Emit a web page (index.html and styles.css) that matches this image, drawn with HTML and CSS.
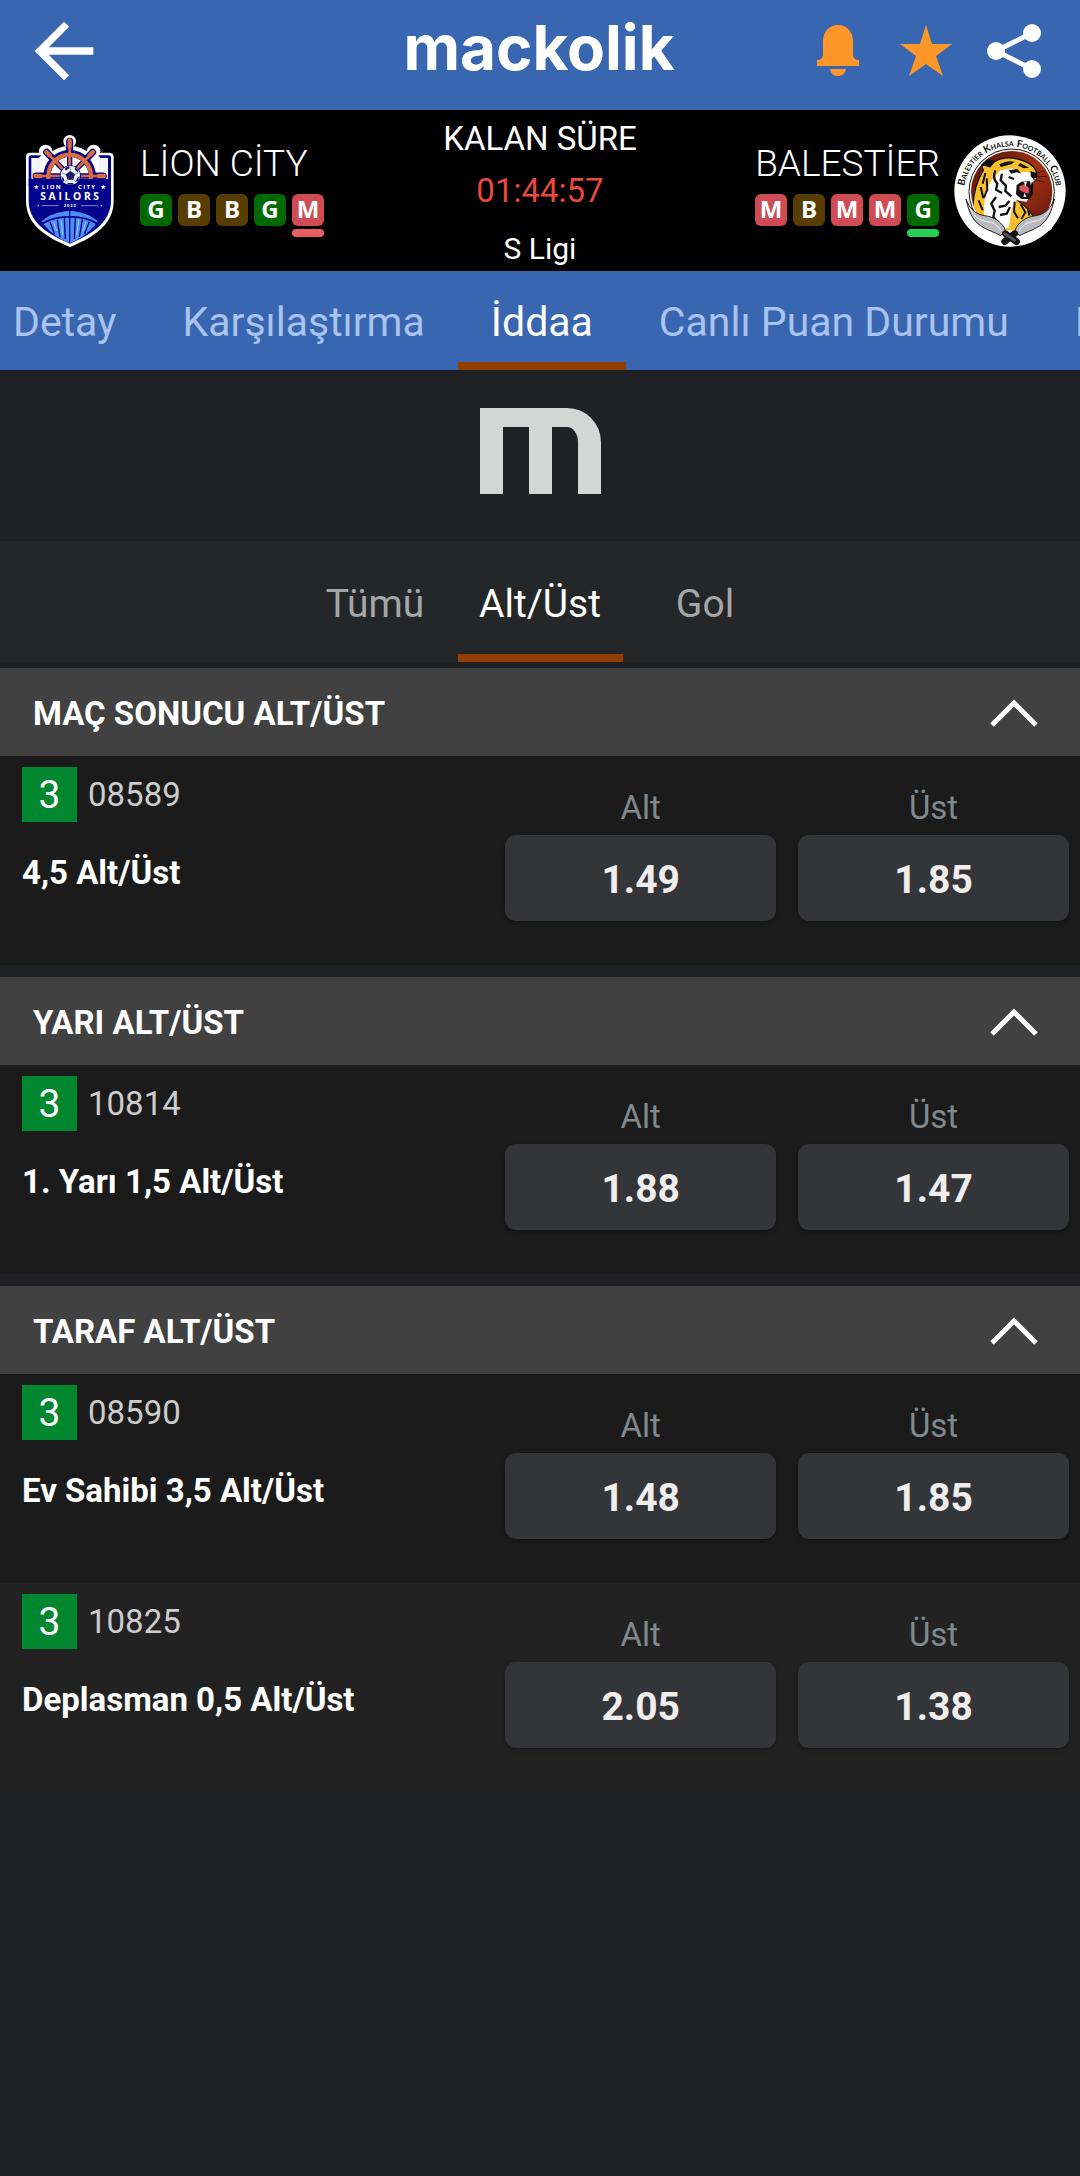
FILE: index.html
```html
<!DOCTYPE html>
<html lang="tr">
  <head>
    <meta charset="UTF-8" />
    <meta name="viewport" content="width=device-width, initial-scale=1.0" />
    <title>mackolik</title>
    <link rel="stylesheet" href="styles.css">
  </head>
  <body>
    <header class="topbar">
      <div class="topbar-left">
        <button class="icon-btn" type="button" aria-label="Geri">
          <svg width="88" height="88" viewBox="0 0 24 24" fill="#fff">
            <path d="M20 11H7.83l5.59-5.59L12 4l-8 8 8 8 1.41-1.41L7.83 13H20v-2z" />
          </svg>
        </button>
      </div>
      <a class="brand" href="#">mackolik</a>
      <div class="topbar-right">
        <button class="icon-btn" type="button" aria-label="Bildirim">
          <svg width="54" height="56" viewBox="0 0 54 56" fill="#ff9728">
            <path d="M27 2c-9 0-15 7-15 16v13c0 4-2 6-6 6v6h42v-6c-4 0-6-2-6-6V18c0-9-6-16-15-16z" />
            <path d="M19 46h16c-1 5-4 7-8 7s-7-2-8-7z" />
          </svg>
        </button>
        <button class="icon-btn" type="button" aria-label="Favori">
          <svg width="54" height="56" viewBox="0 0 54 56" fill="#ff9728">
            <path d="M27 2l6 19h20L37 33l7 20-17-12-17 12 7-20L1 21h20z" />
          </svg>
        </button>
        <button class="icon-btn" type="button" aria-label="Paylaş">
          <svg width="54" height="56" viewBox="0 0 54 56" fill="#fff">
            <path d="M45 10L9 28l36 18" fill="none" stroke="#fff" stroke-width="5" />
            <circle cx="45" cy="10" r="9" />
            <circle cx="9" cy="28" r="9" />
            <circle cx="45" cy="46" r="9" />
          </svg>
        </button>
      </div>
    </header>

    <section class="match">
      <div class="team">
        <svg class="crest" viewBox="42 90 336 336">
          <!-- white outline -->
          <g fill="#fff">
            <path d="M78 156q0-13 13-13h236q14 0 14 13v132c0 66-52 106-131 138C130 394 78 354 78 288z" />
            <circle cx="209" cy="215" r="92" />
            <circle cx="209" cy="109" r="19" />
            <circle cx="137" cy="139" r="20" />
            <circle cx="281" cy="139" r="20" />
          </g>
          <path d="M86 158q0-7 8-7h30l-8 8H94v62h230v-62h-22l-8-8h30q9 0 9 7v128c0 60-46 98-123 130C132 384 86 346 86 286z" fill="#03038c" />
          <path d="M98 163h26l-2 44H98zM296 163h24v44h-22z" fill="#f4f2fb" />
          <!-- ship wheel -->
          <path d="M130 224v-10a79 79 0 0 1 158 0v10z" fill="#03038c" />
          <g stroke="#03038c" stroke-linecap="round" stroke-width="21">
            <path d="M209 205v-96M209 213l-69-71M209 213l69-71M200 213h-92M218 213h92" />
          </g>
          <path d="M152 224v-11a57 57 0 0 1 114 0v11z" fill="#fff" />
          <path d="M209 205v-60M209 213l-48-49M209 213l48-49M200 213h-50M218 213h50" stroke="#03038c" stroke-width="16" />
          <path d="M145 223v-10a64 64 0 0 1 128 0v10" fill="none" stroke="#d96b3d" stroke-width="13" />
          <g stroke="#d96b3d" stroke-linecap="round">
            <path d="M209 205v-90M209 213l-66-68M209 213l66-68M200 213h-88M218 213h88" stroke-width="8" />
            <path d="M209 126v-20M149 151l-10-10M269 151l10-10M122 213h-16M296 213h16" stroke-width="13" />
          </g>
          <path d="M86 222h247v20H86z" fill="#03038c" />
          <!-- ball -->
          <circle cx="211" cy="213" r="32" fill="#03038c" />
          <circle cx="211" cy="211" r="29" fill="#f2f3fb" />
          <path d="M211 198l14 10-5 16h-17l-6-16zM194 189l13-6 2 6-12 8zM226 186l9 10-2 6-9-8zM184 214l7 5 2 9-5 3zM238 214l-7 5-3 9 6 3zM203 234l16 0 2 5-20 0z" fill="#1b1f68" />
          <path d="M211 198v-11M225 208l10-4M220 224l9 8M203 224l-8 8M197 208l-11-4" stroke="#5960a2" stroke-width="2" />
          <g fill="#fff" font-family="Open Sans, sans-serif" font-weight="700">
            <text x="125" y="252" font-size="18" letter-spacing="4">LION</text>
            <text x="234" y="252" font-size="18" letter-spacing="4">CITY</text>
            <text x="213" y="285" font-size="31" letter-spacing="8" text-anchor="middle">SAILORS</text>
            <text x="211" y="306" font-size="12" letter-spacing="3" text-anchor="middle">2020</text>
          </g>
          <path d="M109 239l2 5h5l-4 4 1 5-4-3-4 3 1-5-4-4h5zM310 239l2 5h5l-4 4 1 5-4-3-4 3 1-5-4-4h5z" fill="#fff" />
          <path d="M125 302h50M243 302h50" stroke="#c8c8ef" stroke-width="2" />
          <circle cx="115" cy="302" r="2" fill="#fff" />
          <circle cx="304" cy="302" r="2" fill="#fff" />
          <!-- hull -->
          <path d="M125 349c22-20 50-29 84-31 34 2 62 11 84 31-18 28-46 50-84 66-38-16-66-38-84-66z" fill="#4b8ff2" />
          <path d="M126 356q38-22 83-20 46-2 83 20" fill="none" stroke="#03038c" stroke-width="5" />
          <path d="M209 318v95M150 350l13 36M172 344l8 53M193 340l3 62M226 340l-3 62M247 344l-9 52M268 350l-14 36" stroke="#03038c" stroke-width="4" fill="none" />
          <path d="M160 350l10 28M183 344l5 46M236 344l-6 46M258 350l-10 28" stroke="#a8ccff" stroke-width="3" />
        </svg>
        <div class="team-info">
          <span class="team-name">LİON CİTY</span>
          <div class="form">
            <span class="result win">G</span>
            <span class="result draw">B</span>
            <span class="result draw">B</span>
            <span class="result win">G</span>
            <span class="result loss">M</span>
            <span class="last last-loss"></span>
          </div>
        </div>
      </div>

      <div class="match-center">
        <span class="status">KALAN SÜRE</span>
        <span class="status countdown">01:44:57</span>
        <span class="league">S Ligi</span>
      </div>

      <div class="team away">
        <div class="team-info">
          <span class="team-name">BALESTİER</span>
          <div class="form">
            <span class="result loss">M</span>
            <span class="result draw">B</span>
            <span class="result loss">M</span>
            <span class="result loss">M</span>
            <span class="result win">G</span>
            <span class="last last-win"></span>
          </div>
        </div>
        <svg class="crest" viewBox="702 90 336 336">
          <defs>
            <linearGradient id="red" x1="0" y1="0" x2="1" y2="1">
              <stop offset="0" stop-color="#4c0d05" />
              <stop offset="0.5" stop-color="#a53215" />
              <stop offset="1" stop-color="#5c1408" />
            </linearGradient>
            <clipPath id="inner"><circle cx="875" cy="260" r="122" /></clipPath>
            <path id="arc" d="M732 275A139 139 0 1 1 1009 275" />
          </defs>
          <circle cx="870" cy="258" r="167" fill="#fff" />
          <circle cx="875" cy="260" r="128" fill="#fff" stroke="#111" stroke-width="3" />
          <circle cx="875" cy="260" r="122" fill="url(#red)" />
          <g clip-path="url(#inner)">
            <!-- tiger head and neck -->
            <path d="M758 310c2-40 12-84 32-114l-10-30c14-4 30-2 44 4 18-12 44-14 70-8 24 6 44 16 54 34l2 18-8 16-30 2-40 40 34 24c16 12 28 26 36 44l-50 60H800z" fill="#f7bf2b" stroke="#111" stroke-width="4" />
            <!-- white cheek, muzzle and chest -->
            <path d="M842 196l36-6 18 14 22-4 28 6 2 16-10 10-30 2-12 16 4 22 28 4-8 14-30-4-14 22-10 60-40 6-32-30c-4-40 0-80 14-108l14-20z" fill="#fff" />
            <path d="M776 164c16-4 34-2 48 8l-14 16c-10-4-20-6-26-4zM838 178q22-12 46-8l-10 8-32 8zM900 174l28 14-16 2-18-8zM866 196l26-4 12 14-14-4-16 4zM932 198l16 6 2 14-10 4-8-8z" fill="#111" />
            <path d="M890 240l14-10 28-2 8 10-2 32-10 12-24 0-16-14z" fill="#111" />
            <path d="M898 244l16-6 14 12-2 16-16-4-12-8z" fill="#dc4f5c" />
            <path d="M912 230l4 16 5-15zM930 228l2 14 4-14zM910 276l4-12 5 12z" fill="#fff" />
            <g fill="none" stroke="#111" stroke-width="7">
              <path d="M826 196q-10 24 6 40l-4 18 18 10M846 206l-4 20 16 16-2 16 18 16M828 276l-14 20 10 22-4 18 14 16M868 288l-12 14-20 4M870 306l-10 20-20 4M866 216l16 6" />
              <path d="M796 204l-8 32M782 246l8 34M776 286l12 30M800 220l2 34-10 24M884 290l-2 30 12 20M902 298l14 24-12 20M924 312l4 20" stroke-width="6" />
              <path d="M938 210l36-14M940 216l40-2M938 222l36 10" stroke-width="2" />
            </g>
          </g>
          <!-- white collar below the crossed blades -->
          <path d="M738 292c20 44 58 72 104 94l28-12 28 12c46-20 84-50 106-94l-8 80-70 42h-110l-66-42z" fill="#fff" />
          <g stroke="#222" stroke-width="3">
            <path d="M738 282c8 34 16 62 46 82 22 14 42 18 58 28l14-16c-8-22-30-40-62-44-28-4-46-22-56-50z" fill="#b8babd" />
            <path d="M1003 282c-8 34-16 62-46 82-22 14-42 18-58 28l-14-16c8-22 30-40 62-44 28-4 46-22 56-50z" fill="#b8babd" />
            <path d="M748 306q18 42 56 44 26 4 40 28M993 306q-18 42-56 44-26 4-40 28" fill="none" stroke="#f1f1f1" />
          </g>
          <g stroke-linecap="round">
            <path d="M884 386l-30 24M856 386l34 24" stroke="#111" stroke-width="20" />
            <path d="M854 386l30 20" stroke="#555" stroke-width="8" />
          </g>
          <text font-family="Lato, sans-serif" font-weight="700" font-size="30" fill="#111">
            <textPath class="arc-text" href="#arc" startOffset="50%" text-anchor="middle">Balestier Khalsa Football Club</textPath>
          </text>
        </svg>
      </div>
    </section>

    <nav class="tabs">
      <a href="#">Detay</a>
      <a href="#">Karşılaştırma</a>
      <a class="active" href="#">İddaa</a>
      <a href="#">Canlı Puan Durumu</a>
      <a href="#">Kadrolar</a>
    </nav>

    <div class="sponsor">
      <div class="m-mark"></div>
    </div>

    <nav class="subtabs">
      <a href="#">Tümü</a>
      <a class="active" href="#">Alt/Üst</a>
      <a href="#">Gol</a>
    </nav>

    <main>
      <section class="market">
        <button class="market-head" type="button">
          MAÇ SONUCU ALT/ÜST
          <svg width="48" height="30" viewBox="0 0 48 30"><path d="M2 27L24 5l22 22" /></svg>
        </button>
        <div class="bet">
          <div class="bet-info">
            <div class="bet-code"><span class="mbs">3</span>08589</div>
            <div class="bet-name">4,5 Alt/Üst</div>
          </div>
          <div class="odds">
            <label for="o1">Alt</label>
            <label for="o2">Üst</label>
            <button id="o1" type="button">1.49</button>
            <button id="o2" type="button">1.85</button>
          </div>
        </div>
      </section>

      <section class="market">
        <button class="market-head" type="button">
          YARI ALT/ÜST
          <svg width="48" height="30" viewBox="0 0 48 30"><path d="M2 27L24 5l22 22" /></svg>
        </button>
        <div class="bet">
          <div class="bet-info">
            <div class="bet-code"><span class="mbs">3</span>10814</div>
            <div class="bet-name">1. Yarı 1,5 Alt/Üst</div>
          </div>
          <div class="odds">
            <label for="o3">Alt</label>
            <label for="o4">Üst</label>
            <button id="o3" type="button">1.88</button>
            <button id="o4" type="button">1.47</button>
          </div>
        </div>
      </section>

      <section class="market">
        <button class="market-head" type="button">
          TARAF ALT/ÜST
          <svg width="48" height="30" viewBox="0 0 48 30"><path d="M2 27L24 5l22 22" /></svg>
        </button>
        <div class="bet">
          <div class="bet-info">
            <div class="bet-code"><span class="mbs">3</span>08590</div>
            <div class="bet-name">Ev Sahibi 3,5 Alt/Üst</div>
          </div>
          <div class="odds">
            <label for="o5">Alt</label>
            <label for="o6">Üst</label>
            <button id="o5" type="button">1.48</button>
            <button id="o6" type="button">1.85</button>
          </div>
        </div>
        <div class="bet bet-alt">
          <div class="bet-info">
            <div class="bet-code"><span class="mbs">3</span>10825</div>
            <div class="bet-name">Deplasman 0,5 Alt/Üst</div>
          </div>
          <div class="odds">
            <label for="o7">Alt</label>
            <label for="o8">Üst</label>
            <button id="o7" type="button">2.05</button>
            <button id="o8" type="button">1.38</button>
          </div>
        </div>
      </section>
    </main>
  </body>
</html>
```
FILE: styles.css
```css
* {
  box-sizing: border-box;
}
body {
  margin: 0;
  background-color: #202124;
  color: white;
  font-family: Roboto, sans-serif;
  font-size: 33px;
}
a {
  color: inherit;
  text-decoration: none;
}
button {
  padding: 0;
  border: 0;
  background: none;
  color: inherit;
  font-family: inherit;
  cursor: pointer;
}

/* top bar */
.topbar {
  display: grid;
  grid-template-columns: 1fr auto 1fr;
  align-items: center;
  height: 110px;
  padding: 0 22px 0 20px;
  background-color: #3966b0;
}
.topbar-left,
.topbar-right {
  display: flex;
}
.topbar-right {
  justify-content: flex-end;
}
.icon-btn {
  display: flex;
  align-items: center;
  justify-content: center;
  width: 88px;
  height: 88px;
  margin-bottom: 8px;
}
.brand {
  margin-bottom: 14px;
  font-family: Inter, sans-serif;
  font-size: 62px;
  font-weight: 700;
  line-height: 88px;
}

/* match info */
.match {
  display: grid;
  grid-template-columns: 1fr auto 1fr;
  align-items: center;
  padding: 0 14px;
  background-color: black;
}
.team {
  display: flex;
  align-items: center;
  gap: 14px;
}
.away {
  justify-content: flex-end;
}
.crest {
  width: 112px;
  height: 112px;
}
.arc-text {
  font-variant: small-caps;
}
.team-info {
  display: flex;
  flex-direction: column;
  gap: 10px;
}
.team-name {
  font-size: 37px;
  font-weight: 300;
  line-height: 40px;
}
.form {
  display: grid;
  grid-template-columns: repeat(5, 32px);
  column-gap: 6px;
  row-gap: 3px;
}
.result {
  height: 32px;
  border-radius: 6px;
  font-family: "Open Sans", sans-serif;
  font-size: 24px;
  font-weight: 700;
  line-height: 30px;
  text-align: center;
}
.last {
  grid-column: 5;
  height: 8px;
  border-radius: 4px;
}
.win {
  background-color: #006a00;
}
.draw {
  background-color: #573e00;
}
.loss {
  background-color: #d04c54;
}
.last-win {
  background-color: #28d052;
}
.last-loss {
  background-color: #e85e60;
}
.match-center {
  display: flex;
  flex-direction: column;
  align-items: center;
  padding-top: 3px;
}
.status {
  font-size: 33px;
  line-height: 52px;
}
.countdown {
  color: #e8493c;
}
.league {
  margin-top: 10px;
  font-size: 30px;
  line-height: 44px;
}

/* tabs */
.tabs {
  display: flex;
  overflow: hidden;
  background-color: #3966b0;
  color: #a9c2ee;
}
.tabs a {
  flex: none;
  height: 99px;
  padding: 0 33px;
  border-bottom: 8px solid transparent;
  font-size: 41px;
  line-height: 102px;
}
.tabs a:first-child {
  padding-left: 13px;
}
.tabs .active,
.subtabs .active {
  border-color: #943f02;
  color: white;
}
.sponsor {
  display: flex;
  justify-content: center;
  padding: 38px 0 47px;
}
.m-mark {
  display: flex;
  justify-content: center;
  width: 121px;
  height: 86px;
  border: solid #d2d6d5;
  border-width: 19px 23px 0;
  border-top-right-radius: 34px;
}
.m-mark::before {
  content: "";
  width: 23px;
  background-color: #d2d6d5;
}
.subtabs {
  display: flex;
  justify-content: center;
  margin-bottom: 6px;
  background-color: #252628;
  color: #a5a6a7;
}
.subtabs a {
  width: 165px;
  height: 121px;
  border-bottom: 8px solid transparent;
  font-size: 39px;
  line-height: 127px;
  text-align: center;
}

/* bets */
.market {
  margin-bottom: 12px;
}
.market-head {
  display: flex;
  align-items: center;
  justify-content: space-between;
  width: 100%;
  height: 88px;
  padding: 2px 42px 0 33px;
  background-color: #414141;
  font-size: 33px;
  font-weight: 700;
}
.market-head path {
  fill: none;
  stroke: white;
  stroke-width: 5;
}
.bet {
  display: grid;
  grid-template-columns: 45fr 55fr;
  gap: 22px;
  padding: 11px 11px 44px 22px;
  background-color: #1b1b1b;
}
.bet-alt {
  background-color: #222222;
}
.bet-code {
  display: flex;
  align-items: center;
  gap: 11px;
  margin-bottom: 32px;
  color: #cccccc;
}
.mbs {
  width: 55px;
  padding-top: 2px;
  background-color: #00872f;
  color: white;
  font-size: 39px;
  line-height: 53px;
  text-align: center;
}
.bet-name {
  font-weight: 700;
  line-height: 38px;
}
.odds {
  display: grid;
  grid-template-columns: 1fr 1fr;
  gap: 8px 22px;
  padding-top: 22px;
}
.odds label {
  color: #808a8e;
  line-height: 38px;
  text-align: center;
}
.odds button {
  height: 86px;
  padding-top: 3px;
  border-radius: 11px;
  background-color: #343539;
  box-shadow: 0 2px 4px rgba(0, 0, 0, 0.3);
  color: #f0eeed;
  font-size: 39px;
  font-weight: 700;
}
```
